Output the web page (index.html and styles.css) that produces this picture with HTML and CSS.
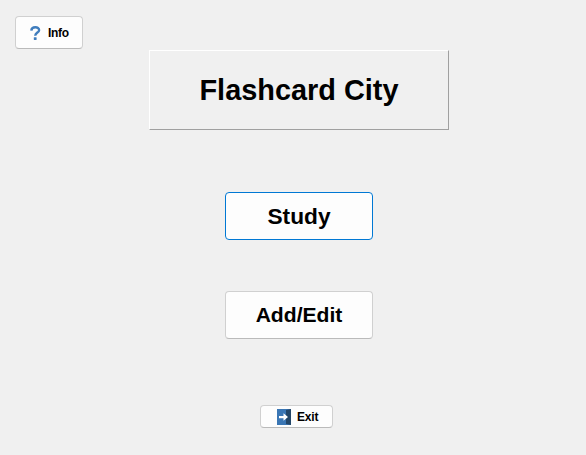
FILE: index.html
```html
<!DOCTYPE html>
<html lang="en">
<head>
<meta charset="utf-8">
<title>Flashcard City</title>
<link rel="stylesheet" href="styles.css">
</head>
<body>
<main class="window">
  <button class="btn info">
    <svg class="icon-help" viewBox="0 0 11 14" width="11" height="14"><path d="M1.300 4.600C1.600 .2 9.300 .3 9.100 4.200C9 6.700 5.400 6.500 5.200 9.800" fill="none" stroke="#3f7dbd" stroke-width="2.400"/><rect x="3.800" y="11.300" width="2.800" height="2.700" rx=".4" fill="#3f7dbd"/></svg>
    <span>Info</span>
  </button>
  <h1 class="title">Flashcard City</h1>
  <button class="btn big study">Study</button>
  <button class="btn big edit">Add/Edit</button>
  <button class="btn exit">
    <svg class="icon-exit" viewBox="0 0 14 16" width="14" height="16"><rect width="14" height="16" fill="#3a76b4"/><path d="M9 1L14 0V16L9 15Z" fill="#234668"/><path d="M2 7H6.500V4.300L11 8L6.500 11.700V9.200H2Z" fill="#fff"/></svg>
    <span>Exit</span>
  </button>
</main>
</body>
</html>
```
FILE: styles.css
```css
* { box-sizing: border-box; }
body { margin: 0; background: #f0f0f0; font-family: "Liberation Sans", Arial, sans-serif; color: #000; }
.window { height: 455px; padding: 16px 0 0 12px; display: flex; flex-direction: column; align-items: center; overflow: hidden; }
.btn { display: flex; align-items: center; justify-content: center; padding: 0; background: #fdfdfd; border: 1px solid #d0d0d0; border-bottom-color: #bababa; border-radius: 4px; font: bold 12px "Liberation Sans", Arial, sans-serif; color: #000; }
.info { align-self: flex-start; justify-content: flex-start; width: 68px; height: 33px; margin-left: 3px; padding-left: 14px; gap: 7px; letter-spacing: -0.3px; }
.title { width: 300px; height: 80px; margin: 1px 0 62px; display: flex; align-items: center; justify-content: center; font-size: 28.900px; line-height: 1; border: 1px solid #fff; border-right-color: #a0a0a0; border-bottom-color: #a0a0a0; }
.big { width: 148px; height: 48px; font-size: 22.700px; }
.study { border-color: #0078d4; margin-bottom: 51px; }
.edit { font-size: 21.100px; margin-bottom: 66px; }
.exit { width: 73px; height: 23px; margin-right: 5px; justify-content: flex-start; padding-left: 16px; gap: 6px; letter-spacing: -0.2px; }
```
